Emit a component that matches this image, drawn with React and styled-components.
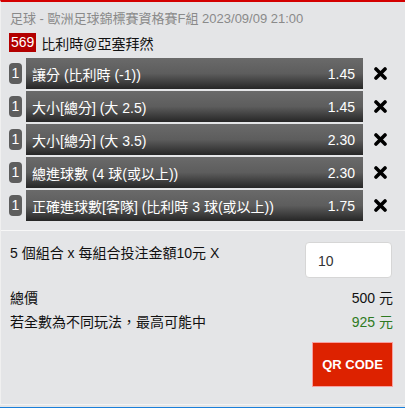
import React from 'react'
import styled, {createGlobalStyle} from 'styled-components'

const Global = createGlobalStyle`
  body {
    margin: 0;
    background: #e4e5e7;
    font-family: "Liberation Sans", Arial, "Noto Sans CJK TC", sans-serif;
  }
`

const Panel = styled.div`
  border-top: 2px solid #d40000;
  border-bottom: 1px solid #f3f3f3;
  border-left: 1px solid #f0f0f0;
  background: #e4e5e7;
  height: 405px;
  box-sizing: border-box;
`

const Header = styled.div`
  padding: 9px 9px 0;
  font-size: 13px;
  line-height: 16px;
  color: #8a8a8a;
  white-space: nowrap;
`

const Match = styled.div`
  display: flex;
  align-items: center;
  margin: 6px 0 0 8px;
  height: 19px;
  font-size: 14px;
  color: #111;
`

const MatchNo = styled.span`
  background: #b30000;
  color: #fff;
  height: 19px;
  line-height: 19px;
  padding: 0 2px;
  margin-right: 5px;
`

const Legs = styled.div`
  margin-top: 6px;
  display: flex;
  flex-direction: column;
  gap: 2px;
`

const Leg = styled.div`
  display: flex;
  align-items: center;
  height: 31px;
  padding-left: 8px;
`

const Count = styled.span`
  width: 13px;
  height: 21px;
  line-height: 21px;
  border-radius: 4px;
  background: #5e5e5e;
  color: #fff;
  font-size: 14px;
  text-align: center;
  margin-right: 4px;
`

const Bar = styled.div`
  flex: 1;
  height: 31px;
  display: flex;
  align-items: center;
  justify-content: space-between;
  padding: 1px 8px 0 6px;
  box-sizing: border-box;
  color: #fff;
  font-size: 14px;
  background: linear-gradient(#6a6a6a 0%, #5d5d5d 50%, #3a3a3a 82%, #262626 100%);
  white-space: nowrap;
`

const Remove = styled.div`
  width: 42px;
  display: flex;
  padding-left: 11px;
  box-sizing: border-box;
`

const Summary = styled.div`
  margin-top: 9px;
  border-top: 1px solid #f7f7f7;
  padding: 11px 12px 0 9px;
  font-size: 14px;
  color: #111;
`

const StakeRow = styled.div`
  display: flex;
  justify-content: space-between;
  align-items: flex-start;
`

const StakeText = styled.span`
  line-height: 20px;
  padding-top: 1px;
`

const Input = styled.input`
  width: 87px;
  height: 36px;
  box-sizing: border-box;
  border: 1px solid #d6d6d6;
  border-radius: 4px;
  background: #fff;
  padding: 2px 0 0 12px;
  font: inherit;
  font-size: 14px;
  color: #333;
  margin-right: 1px;
`

const Totals = styled.div`
  margin-top: 8px;
`

const Line = styled.div`
  display: flex;
  justify-content: space-between;
  line-height: 24px;
`

const Amount = styled.span`
  color: ${p => p.$green ? '#2e7a22' : '#111'};
`

const Actions = styled.div`
  display: flex;
  justify-content: flex-end;
  margin-top: 8px;
`

const QrButton = styled.button`
  width: 81px;
  height: 45px;
  background: #dd2200;
  border: 1px solid #f7a0a0;
  color: #fff;
  font: inherit;
  font-size: 13px;
  font-weight: bold;
  padding: 0;
`

const BlueLine = styled.div`
  margin-top: 2px;
  height: 1px;
  background: #1a7fd9;
`

const XIcon = () => (
  <svg width="13" height="13" viewBox="0 0 13 13">
    <path d="M2 2 L11 11 M11 2 L2 11" stroke="#000" strokeWidth="3.6" strokeLinecap="round" />
  </svg>
)

const legs = [
  ['讓分 (比利時 (-1))', '1.45'],
  ['大小[總分] (大 2.5)', '1.45'],
  ['大小[總分] (大 3.5)', '2.30'],
  ['總進球數 (4 球(或以上))', '2.30'],
  ['正確進球數[客隊] (比利時 3 球(或以上))', '1.75'],
]

export default function App() {
  return (
    <>
      <Global />
      <Panel>
        <Header>足球 - 歐洲足球錦標賽資格賽F組 2023/09/09 21:00</Header>
        <Match>
          <MatchNo>569</MatchNo>
          比利時@亞塞拜然
        </Match>
        <Legs>
          {legs.map(([name, odds]) => (
            <Leg key={name}>
              <Count>1</Count>
              <Bar>
                <span>{name}</span>
                <span>{odds}</span>
              </Bar>
              <Remove><XIcon /></Remove>
            </Leg>
          ))}
        </Legs>
        <Summary>
          <StakeRow>
            <StakeText>5 個組合 x 每組合投注金額10元 X</StakeText>
            <Input defaultValue="10" />
          </StakeRow>
          <Totals>
            <Line>
              <span>總價</span>
              <Amount>500 元</Amount>
            </Line>
            <Line>
              <span>若全數為不同玩法，最高可能中</span>
              <Amount $green>925 元</Amount>
            </Line>
          </Totals>
          <Actions>
            <QrButton>QR CODE</QrButton>
          </Actions>
        </Summary>
      </Panel>
      <BlueLine />
    </>
  )
}
